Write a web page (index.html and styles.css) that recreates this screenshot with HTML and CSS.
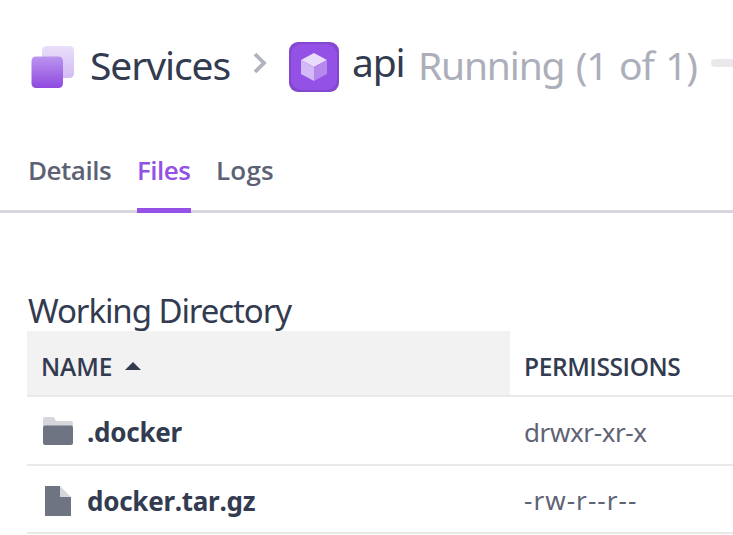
FILE: index.html
```
<!DOCTYPE html>
<html lang="en">
<head>
<meta charset="utf-8">
<title>Services - api</title>
<link rel="stylesheet" href="styles.css">
</head>
<body>
<header class="crumbs">
  <svg class="services-icon" width="43" height="42" viewBox="0 0 43 42">
    <defs>
      <linearGradient id="back" x2="0" y2="1"><stop stop-color="#e9dffa"/><stop offset="1" stop-color="#d3bbf4"/></linearGradient>
      <linearGradient id="front" x2="0" y2="1"><stop stop-color="#bb95ee"/><stop offset="1" stop-color="#8f49e0"/></linearGradient>
    </defs>
    <rect x="11" width="32" height="32" rx="4.5" fill="url(#back)"/>
    <rect x="0.500" y="10.500" width="31.500" height="31.500" rx="4.5" fill="url(#front)"/>
  </svg>
  <span class="services">Services</span>
  <svg class="chevron" width="14" height="22" viewBox="0 0 14 22"><path d="M2 2l9 9-9 9" fill="none" stroke="#b0b2bd" stroke-width="3.8"/></svg>
  <svg class="api-icon" width="50" height="50" viewBox="0 0 50 50">
    <rect width="50" height="50" rx="9" fill="#8448ce"/>
    <rect x="2" y="2" width="46" height="46" rx="11" fill="#9351e5"/>
    <path d="M25 11l13 7-13 7-13-7z" fill="#e9dcfa"/>
    <path d="M12 18l13 7v14l-13-7z" fill="#d3b9f5"/>
    <path d="M38 18l-13 7v14l13-7z" fill="#b588ee"/>
  </svg>
  <span class="api">api</span>
  <span class="status">Running (1 of 1)</span>
  <span class="progress"></span>
</header>
<nav class="tabs">
  <a class="tab details">Details</a>
  <a class="tab active">Files</a>
  <a class="tab logs">Logs</a>
</nav>
<main>
  <h2><span>Working Directory</span></h2>
  <div class="row head">
    <div class="cell sorted"><span class="name-label">NAME</span><svg class="sort" width="16" height="8" viewBox="0 0 16 8"><path d="M0 8l8-8 8 8z" fill="#323b50"/></svg></div>
    <div class="cell"><span class="perm-label">PERMISSIONS</span></div>
  </div>
  <div class="row folder-row">
    <div class="cell name">
      <svg class="icon" width="30" height="28" viewBox="0 0 30 28"><path d="M0 11V2q0-2 2-2h8q1 0 2 2l1 2h15q2 0 2 2v5z" fill="#d5d7dc"/><rect y="8.500" width="30" height="19.500" rx="2" fill="#6e7482"/></svg>
      <span class="folder">.docker</span>
    </div>
    <div class="cell mode"><span class="mode-a">drwxr-xr-x</span></div>
  </div>
  <div class="row file-row">
    <div class="cell name">
      <svg class="icon" width="30" height="30" viewBox="0 0 30 30"><path d="M2 0h15v11h11v19H2z" fill="#6e7482"/><path d="M17 0l11 11H17z" fill="#d5d7dc"/></svg>
      <span class="file">docker.tar.gz</span>
    </div>
    <div class="cell mode"><span class="mode-b">-rw-r--r--</span></div>
  </div>
</main>
</body>
</html>
```
FILE: styles.css
```
* { box-sizing: border-box; }
body {
  margin: 0;
  height: 535px;
  overflow: hidden;
  background: #fff;
  color: #323b50;
  font-family: "Noto Sans", sans-serif;
  white-space: nowrap;
}
.crumbs { display: flex; align-items: flex-start; height: 145px; padding: 35px 0 0 31px; font-size: 39px; line-height: 60px; }
.crumbs > * { flex: none; }
.services-icon { margin-top: 11px; }
.services { width: 161px; margin-left: 16px; letter-spacing: -1.1px; }
.chevron { margin-top: 17px; margin-left: 2px; }
.api-icon { margin: 7px 0 0 22px; }
.api { width: 66px; margin: -3px 0 0 13px; letter-spacing: -1.2px; }
.status { width: 293px; color: #acafba; letter-spacing: -1.2px; word-spacing: 2.6px; }
.crumbs > .progress { flex: 1 1 0; height: 8px; margin-top: 24px; border-radius: 4px 0 0 4px; background: #e9e9eb; }
.tabs { display: flex; gap: 26px; height: 68px; padding-left: 28px; border-bottom: 3px solid #d7d6dc; font-family: "Open Sans", sans-serif; font-size: 26px; font-weight: 600; color: #5c6273; line-height: 50px; }
.tab { height: 68px; }
.details { width: 83px; letter-spacing: -0.5px; }
.active { width: 54px; color: #9351e5; border-bottom: 5px solid #9351e5; letter-spacing: -0.5px; }
.logs { margin-left: -1px; letter-spacing: 0.2px; }
main { padding: 67px 0 0 27px; }
h2 { margin: 0; height: 51px; padding-top: 11px; font-size: 33px; font-weight: 400; line-height: 40px; letter-spacing: -1.08px; }
h2 span { margin-left: 1px; }
.row { display: grid; grid-template-columns: 483px 1fr; grid-template-rows: 100%; height: 69px; border-bottom: 2px solid #e9e9ea; }
.head { height: 66px; font-family: "Open Sans", sans-serif; font-size: 24.5px; font-weight: 600; line-height: 72px; }
.file-row { height: 68px; }
.cell { display: flex; padding-left: 14px; }
.sorted { background: #f2f2f2; }
.name-label { width: 84px; letter-spacing: -0.1px; }
.sort { margin-top: 31px; }
.perm-label { letter-spacing: -0.4px; }
.mode { color: #5f6475; font-size: 26px; line-height: 70px; }
.mode-a { letter-spacing: -0.4px; }
.mode-b { letter-spacing: 1.05px; line-height: 68px; font-kerning: none; }
.name { padding-left: 16px; font-size: 26px; font-weight: 700; line-height: 71px; }
.icon { margin: 20px 14px 0 0; }
.folder { letter-spacing: -0.25px; font-kerning: none; }
.file { letter-spacing: -0.27px; line-height: 70px; font-kerning: none; }
```
